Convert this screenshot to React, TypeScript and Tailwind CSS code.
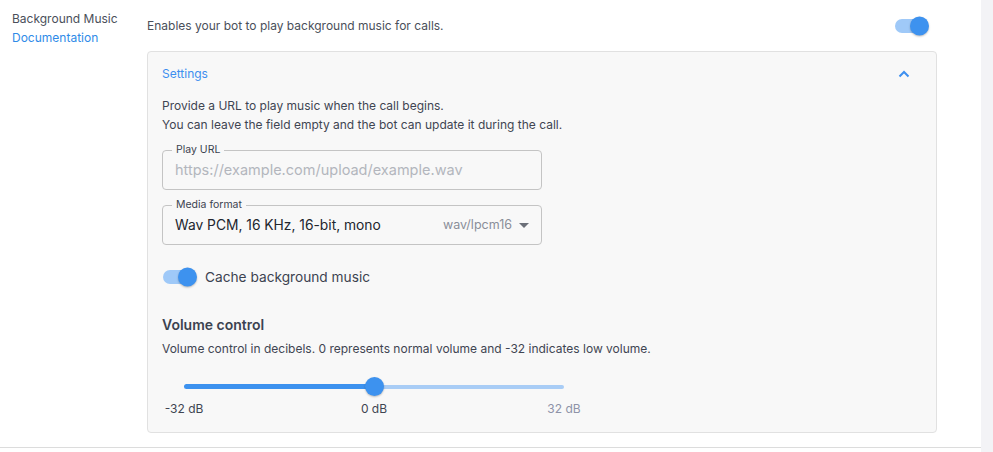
import React from "react";

function Toggle() {
  return (
    <div className="relative flex h-[18px] w-[34px] items-center">
      <div className="h-[14px] w-[32px] rounded-full bg-[#9fc9f8]" />
      <div className="absolute right-0 top-0 h-[19px] w-[19px] -translate-y-[0.5px] rounded-full bg-[#3d92ef] shadow-[0_1px_2px_rgba(0,0,0,0.25)]" />
    </div>
  );
}

export default function App() {
  return (
    <div
      className="flex h-[452px] w-[993px] bg-white text-[#3c4350]"
      style={{ fontFamily: "Inter, 'Noto Sans', sans-serif" }}
    >
      <div className="flex h-[448px] w-[981px] border-b border-[#dcdcdc]">
        <div className="w-[147px] shrink-0 pl-3 pt-[9px] text-[12px] leading-[19px]">
          <div className="text-[#4a4f5a]">Background Music</div>
          <div className="text-[#2f8be8]">Documentation</div>
        </div>
        <div className="flex w-[790px] flex-col pt-[16px]">
          <div className="flex h-[20px] items-center justify-between pr-[8px]">
            <span className="text-[12px] text-[#4a4f5a]">Enables your bot to play background music for calls.</span>
            <Toggle />
          </div>
          <div className="mt-[15px] h-[382px] rounded-[4px] border border-[#e1e1e1] bg-[#f8f8f8] px-[14px]">
            <div className="flex h-[43px] items-center justify-between pt-[1px]">
              <span className="text-[12px] text-[#3d8fef]">Settings</span>
              <svg width="12" height="8" viewBox="0 0 12 8" className="mr-[12px]">
                <path d="M1.5 6.5 L6 2 L10.5 6.5" fill="none" stroke="#3d8fef" strokeWidth="2" />
              </svg>
            </div>
            <div className="mt-[1px] text-[12px] leading-[19px] text-[#3f4552]">
              <div>Provide a URL to play music when the call begins.</div>
              <div>You can leave the field empty and the bot can update it during the call.</div>
            </div>
            <div className="relative mt-[16px] flex h-[40px] w-[380px] items-center rounded-[4px] border border-[#c4c4c4] px-[12px]">
              <span className="absolute -top-[8px] left-[9px] bg-[#f8f8f8] px-[4px] text-[10.5px] leading-[14px] text-[#3c4350]">
                Play URL
              </span>
              <span className="text-[14.5px] text-[#b3b6bd]">https://example.com/upload/example.wav</span>
            </div>
            <div className="relative mt-[15px] flex h-[40px] w-[380px] items-center rounded-[4px] border border-[#c4c4c4] pl-[12px] pr-[12px]">
              <span className="absolute -top-[8px] left-[9px] bg-[#f8f8f8] px-[4px] text-[10.5px] leading-[14px] text-[#3c4350]">
                Media format
              </span>
              <span className="flex-1 text-[13.8px] text-[#22262e]">Wav PCM, 16 KHz, 16-bit, mono</span>
              <span className="text-[12.5px] text-[#8a8e99]">wav/lpcm16</span>
              <svg width="10" height="5" viewBox="0 0 10 5" className="ml-[7px] mt-[1px]">
                <path d="M0 0 L10 0 L5 5 Z" fill="#6b6f78" />
              </svg>
            </div>
            <div className="mt-[22px] flex items-center gap-[8px] pl-[1px]">
              <Toggle />
              <span className="text-[13.7px] text-[#3c4350]">Cache background music</span>
            </div>
            <div className="mt-[27px] text-[14px] font-semibold leading-[20px] text-[#3c4350]">Volume control</div>
            <div className="mt-[4px] text-[12px] leading-[19px] text-[#3f4552]">
              Volume control in decibels. 0 represents normal volume and -32 indicates low volume.
            </div>
            <div className="ml-[2px] mt-[19px] w-[420px]">
              <div className="flex h-[20px] items-center px-[20px]">
                <div className="h-[5px] w-[190px] rounded-l-full bg-[#3d92ef]" />
                <div className="relative z-10 -mx-[9px] h-[19px] w-[19px] shrink-0 rounded-full bg-[#3d92ef] shadow-[0_1px_2px_rgba(0,0,0,0.25)]" />
                <div className="h-[4px] w-[190px] rounded-r-full bg-[#a9cdf6]" />
              </div>
              <div className="mt-[3px] flex justify-between text-[12px] leading-[18px]">
                <span className="w-[40px] whitespace-nowrap text-center text-[#3f4552]">-32 dB</span>
                <span className="w-[40px] whitespace-nowrap text-center text-[#3f4552]">0 dB</span>
                <span className="w-[40px] whitespace-nowrap text-center text-[#8e93a8]">32 dB</span>
              </div>
            </div>
          </div>
        </div>
      </div>
      <div className="h-[452px] w-[12px] bg-[#f3f3f6]" />
    </div>
  );
}
